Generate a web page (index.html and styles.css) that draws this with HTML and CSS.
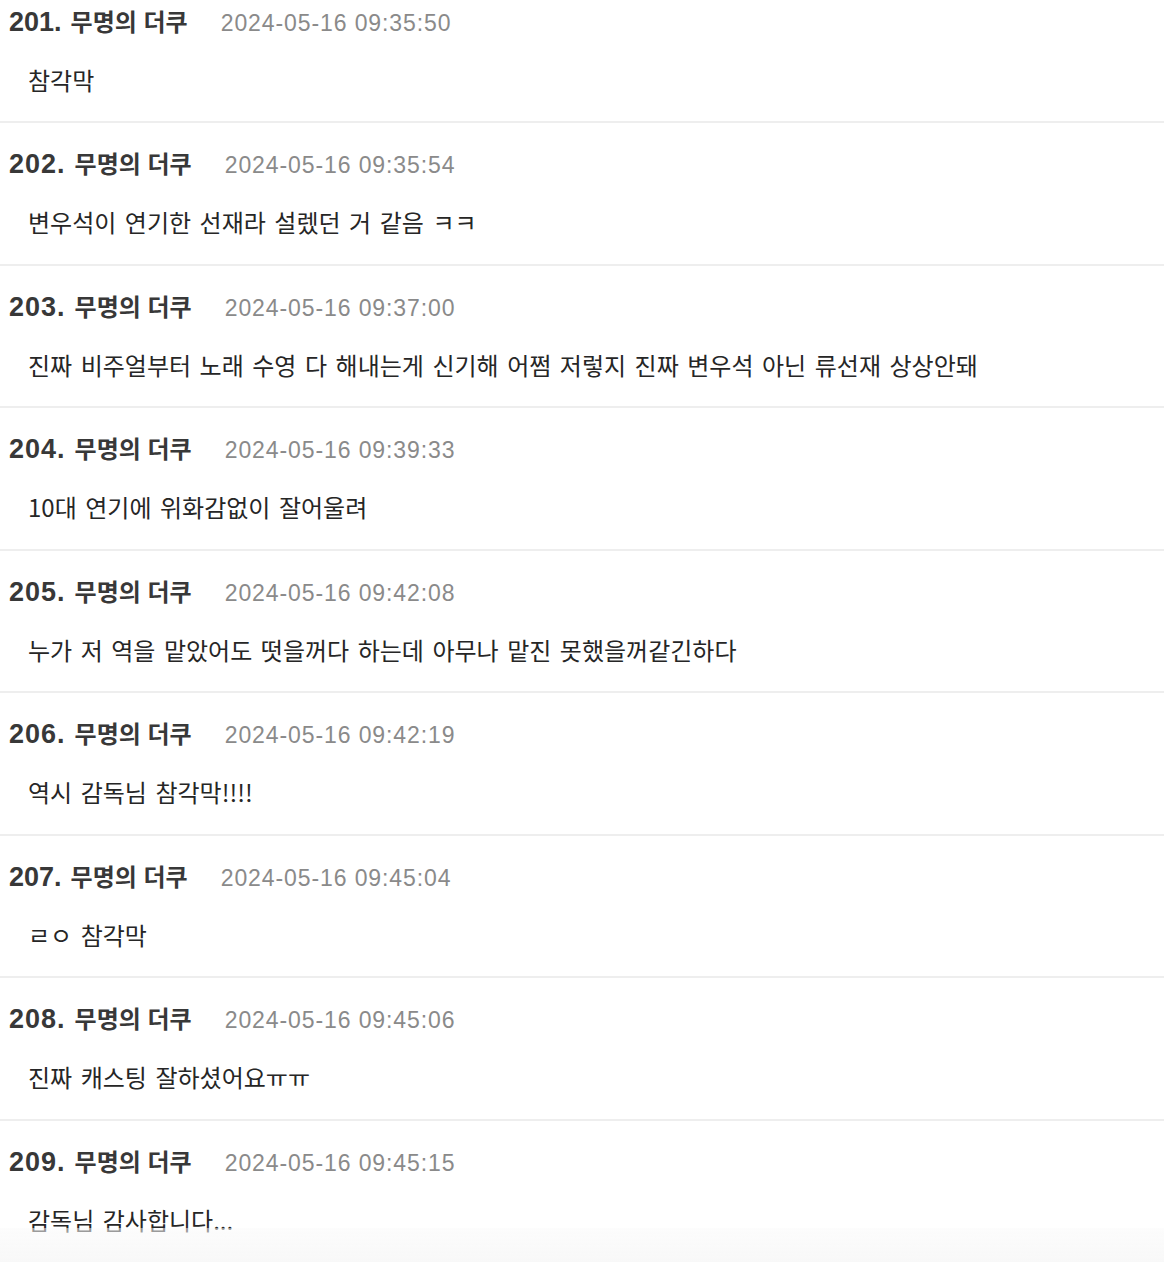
FILE: index.html
```html
<!DOCTYPE html>
<html lang="ko">
<head>
<meta charset="utf-8">
<title>댓글</title>
<link rel="stylesheet" href="styles.css">
</head>
<body>
<div class="list">
  <div class="item">
    <div class="head"><span class="num num-slim">201.</span><span class="name">무명의 더쿠</span><span class="date">2024-05-16 09:35:50</span></div>
    <div class="text">참각막</div>
  </div>
  <div class="item">
    <div class="head"><span class="num">202.</span><span class="name">무명의 더쿠</span><span class="date">2024-05-16 09:35:54</span></div>
    <div class="text">변우석이 연기한 선재라 설렜던 거 같음 ㅋㅋ</div>
  </div>
  <div class="item">
    <div class="head"><span class="num">203.</span><span class="name">무명의 더쿠</span><span class="date">2024-05-16 09:37:00</span></div>
    <div class="text">진짜 비주얼부터 노래 수영 다 해내는게 신기해 어쩜 저렇지 진짜 변우석 아닌 류선재 상상안돼</div>
  </div>
  <div class="item">
    <div class="head"><span class="num">204.</span><span class="name">무명의 더쿠</span><span class="date">2024-05-16 09:39:33</span></div>
    <div class="text">10대 연기에 위화감없이 잘어울려</div>
  </div>
  <div class="item">
    <div class="head"><span class="num">205.</span><span class="name">무명의 더쿠</span><span class="date">2024-05-16 09:42:08</span></div>
    <div class="text">누가 저 역을 맡았어도 떳을꺼다 하는데 아무나 맡진 못했을꺼같긴하다</div>
  </div>
  <div class="item">
    <div class="head"><span class="num">206.</span><span class="name">무명의 더쿠</span><span class="date">2024-05-16 09:42:19</span></div>
    <div class="text">역시 감독님 참각막!!!!</div>
  </div>
  <div class="item">
    <div class="head"><span class="num num-slim">207.</span><span class="name">무명의 더쿠</span><span class="date">2024-05-16 09:45:04</span></div>
    <div class="text">ㄹㅇ 참각막</div>
  </div>
  <div class="item">
    <div class="head"><span class="num">208.</span><span class="name">무명의 더쿠</span><span class="date">2024-05-16 09:45:06</span></div>
    <div class="text">진짜 캐스팅 잘하셨어요ㅠㅠ</div>
  </div>
  <div class="item">
    <div class="head"><span class="num">209.</span><span class="name">무명의 더쿠</span><span class="date">2024-05-16 09:45:15</span></div>
    <div class="text">감독님 감사합니다...</div>
  </div>
</div>
<div class="fade"></div>
</body>
</html>
```
FILE: styles.css
```css
html, body {
  margin: 0;
  padding: 0;
  background: #ffffff;
  overflow: hidden;
}
body {
  font-family: "Liberation Sans", "Noto Sans CJK KR", sans-serif;
  color: #262626;
}
.list {
  margin-top: -19.5px;
}
.item {
  padding: 25px 0 26.5px;
  border-bottom: 2px solid #eeeeee;
}
.head {
  display: flex;
  align-items: baseline;
  height: 30px;
  line-height: 30px;
  padding-left: 9px;
  white-space: nowrap;
}
.num {
  font-family: "Liberation Sans", sans-serif;
  font-weight: 700;
  font-size: 27px;
  letter-spacing: 1px;
  color: #383838;
  margin-right: 9px;
}
.num-slim {
  letter-spacing: 0;
}
.name {
  font-family: "Noto Sans CJK KR", sans-serif;
  font-weight: 700;
  font-size: 24px;
  color: #383838;
}
.date {
  font-family: "Liberation Sans", sans-serif;
  font-size: 23px;
  letter-spacing: 0.9px;
  color: #8a8a8a;
  margin-left: 33px;
}
.text {
  margin-top: 29px;
  padding-left: 28px;
  font-family: "Noto Sans CJK KR", sans-serif;
  font-size: 24px;
  word-spacing: 1.8px;
  line-height: 30px;
  height: 30px;
  white-space: nowrap;
  color: #262626;
}
.fade {
  position: fixed;
  left: 0;
  right: 0;
  bottom: 0;
  height: 34px;
  background: linear-gradient(to bottom, rgba(250, 250, 250, 0.5), #f8f8f8);
  pointer-events: none;
}
```
